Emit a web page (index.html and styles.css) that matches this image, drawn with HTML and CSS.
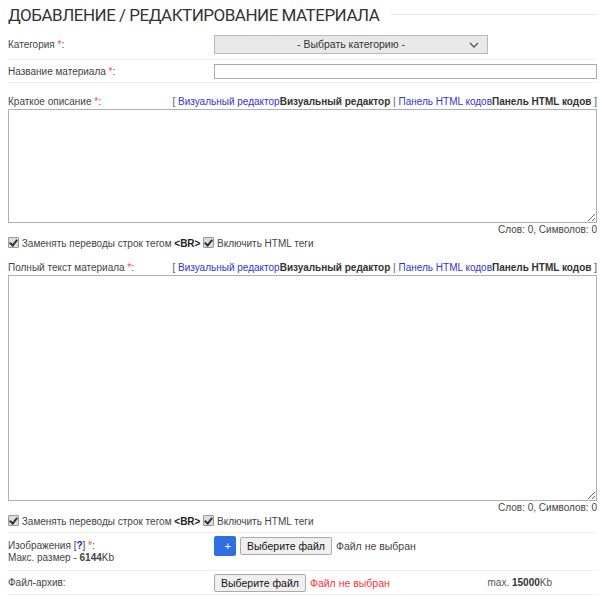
FILE: index.html
```html
<!DOCTYPE html>
<html lang="ru">
<head>
<meta charset="utf-8">
<link rel="stylesheet" href="styles.css">
</head>
<body>
<div class="page">
  <div class="title"><h1>ДОБАВЛЕНИЕ / РЕДАКТИРОВАНИЕ МАТЕРИАЛА</h1><span class="title-line"></span></div>

  <div class="row row-cat">
    <div class="label">Категория <span class="req">*</span>:</div>
    <div class="field"><div class="select"><span>- Выбрать категорию -</span><svg class="chev" width="10" height="6" viewBox="0 0 10 6"><path d="M1 1 L5 5 L9 1" fill="none" stroke="#555" stroke-width="1.3"/></svg></div></div>
  </div>

  <div class="row row-name">
    <div class="label">Название материала <span class="req">*</span>:</div>
    <div class="field"><div class="input"></div></div>
  </div>

  <div class="block block-short">
    <div class="head">
      <div class="label">Краткое описание <span class="req">*</span>:</div>
      <div class="modes">[ <a>Визуальный редактор</a><b>Визуальный редактор</b> | <a>Панель HTML кодов</a><b>Панель HTML кодов</b> ]</div>
    </div>
    <textarea class="ta ta-short"></textarea>
    <div class="count">Слов: 0, Символов: 0</div>
    <div class="checks"><span class="cb"></span> Заменять переводы строк тегом <b>&lt;BR&gt;</b> <span class="cb"></span> Включить HTML теги</div>
  </div>

  <div class="block block-full">
    <div class="head">
      <div class="label">Полный текст материала <span class="req">*</span>:</div>
      <div class="modes">[ <a>Визуальный редактор</a><b>Визуальный редактор</b> | <a>Панель HTML кодов</a><b>Панель HTML кодов</b> ]</div>
    </div>
    <textarea class="ta ta-full"></textarea>
    <div class="count">Слов: 0, Символов: 0</div>
    <div class="checks"><span class="cb"></span> Заменять переводы строк тегом <b>&lt;BR&gt;</b> <span class="cb"></span> Включить HTML теги</div>
  </div>

  <div class="row row-img">
    <div class="label">Изображения [<a class="q">?</a>] <span class="req">*</span>:<br>Макс. размер - <b>6144</b>Kb</div>
    <div class="field files"><span class="plus">+</span><span class="btn">Выберите файл</span><span class="nofile">Файл не выбран</span></div>
  </div>

  <div class="row row-arch">
    <div class="label">Файл-архив:</div>
    <div class="field files"><span class="btn">Выберите файл</span><span class="nofile red">Файл не выбран</span><span class="max">max. <b>15000</b>Kb</span></div>
  </div>
</div>
</body>
</html>
```
FILE: styles.css
```css
html, body { margin: 0; padding: 0; background: #fff; }
.page {
  margin: 0 3px 0 8px;
  font-family: "Liberation Sans", Arial, sans-serif;
  font-size: 10px;
  color: #444;
}
.title { display: flex; align-items: center; height: 29px; }
.title h1 {
  margin: 0;
  font-family: Roboto, "Liberation Sans", sans-serif;
  font-weight: 400;
  font-size: 17px;
  letter-spacing: -0.5px;
  color: #333;
  white-space: nowrap;
}
.title-line { flex: 1; height: 1px; background: #e6e6e6; margin-left: 12px; }
.req { color: #f44; }
.row {
  display: grid;
  grid-template-columns: 206px 1fr;
  align-items: center;
  border-bottom: 1px solid #efefef;
}
.row-cat { height: 30px; }
.row-name { height: 22px; }
.select {
  width: 272px; height: 17px;
  border: 1px solid #b9b9b9;
  background: #e8e8e8;
  position: relative;
  display: flex; align-items: center; justify-content: center;
  font-size: 10.5px; color: #333;
}
.chev { position: absolute; right: 8px; top: 6px; }
.input { height: 13px; border: 1px solid #aaa; background: #fff; }
.block-short { padding-top: 11px; }
.block-full { padding-top: 9px; border-bottom: 1px solid #efefef; }
.head { display: flex; justify-content: space-between; align-items: center; height: 14px; white-space: nowrap; }
.modes { color: #555; }
.modes a { color: #33c; }
.modes b { color: #333; }
.ta {
  display: block; box-sizing: border-box; width: 100%;
  border: 1px solid #b0b0b0; margin: 1px 0 0; padding: 0;
  resize: vertical;
}
.ta-short { height: 114px; }
.ta-full { height: 226px; }
.count { text-align: right; height: 13px; line-height: 13px; }
.checks { display: block; height: 15px; line-height: 15px; white-space: nowrap; }
.block-full .checks { padding-bottom: 3px; }
.checks b { color: #222; }
.cb {
  display: inline-block; width: 9px; height: 9px; vertical-align: -1px;
  border: 1px solid #999; background: #ddd; border-radius: 1px;
  position: relative;
}
.cb::after {
  content: ""; position: absolute; left: 2px; top: 0px; width: 3px; height: 6px;
  border: solid #333; border-width: 0 2px 2px 0; transform: rotate(40deg);
}
.row-img { height: 37px; line-height: 12px; }
.row-img .files { align-self: start; margin-top: 3px; }
.row-arch { height: 23px; }
.files { display: flex; align-items: center; font-size: 10.5px; }
.plus {
  width: 22px; height: 20px; background: #2f6fe0; border-radius: 2px;
  color: #fff; display: flex; align-items: center; justify-content: flex-end;
  box-sizing: border-box; padding-right: 5px; font-size: 11px; margin-right: 4px;
}
.btn {
  border: 1px solid #aaa; background: #efefef; border-radius: 2px;
  padding: 0 6px; color: #111; height: 16px; line-height: 16px;
}
.nofile { margin-left: 4px; color: #444; font-size: 10.5px; }
.red { color: #f33; }
.max { margin-left: auto; margin-right: 45px; font-size: 10px; color: #555; }
.max b { color: #333; }
.q { color: #22c; font-weight: bold; }
```
